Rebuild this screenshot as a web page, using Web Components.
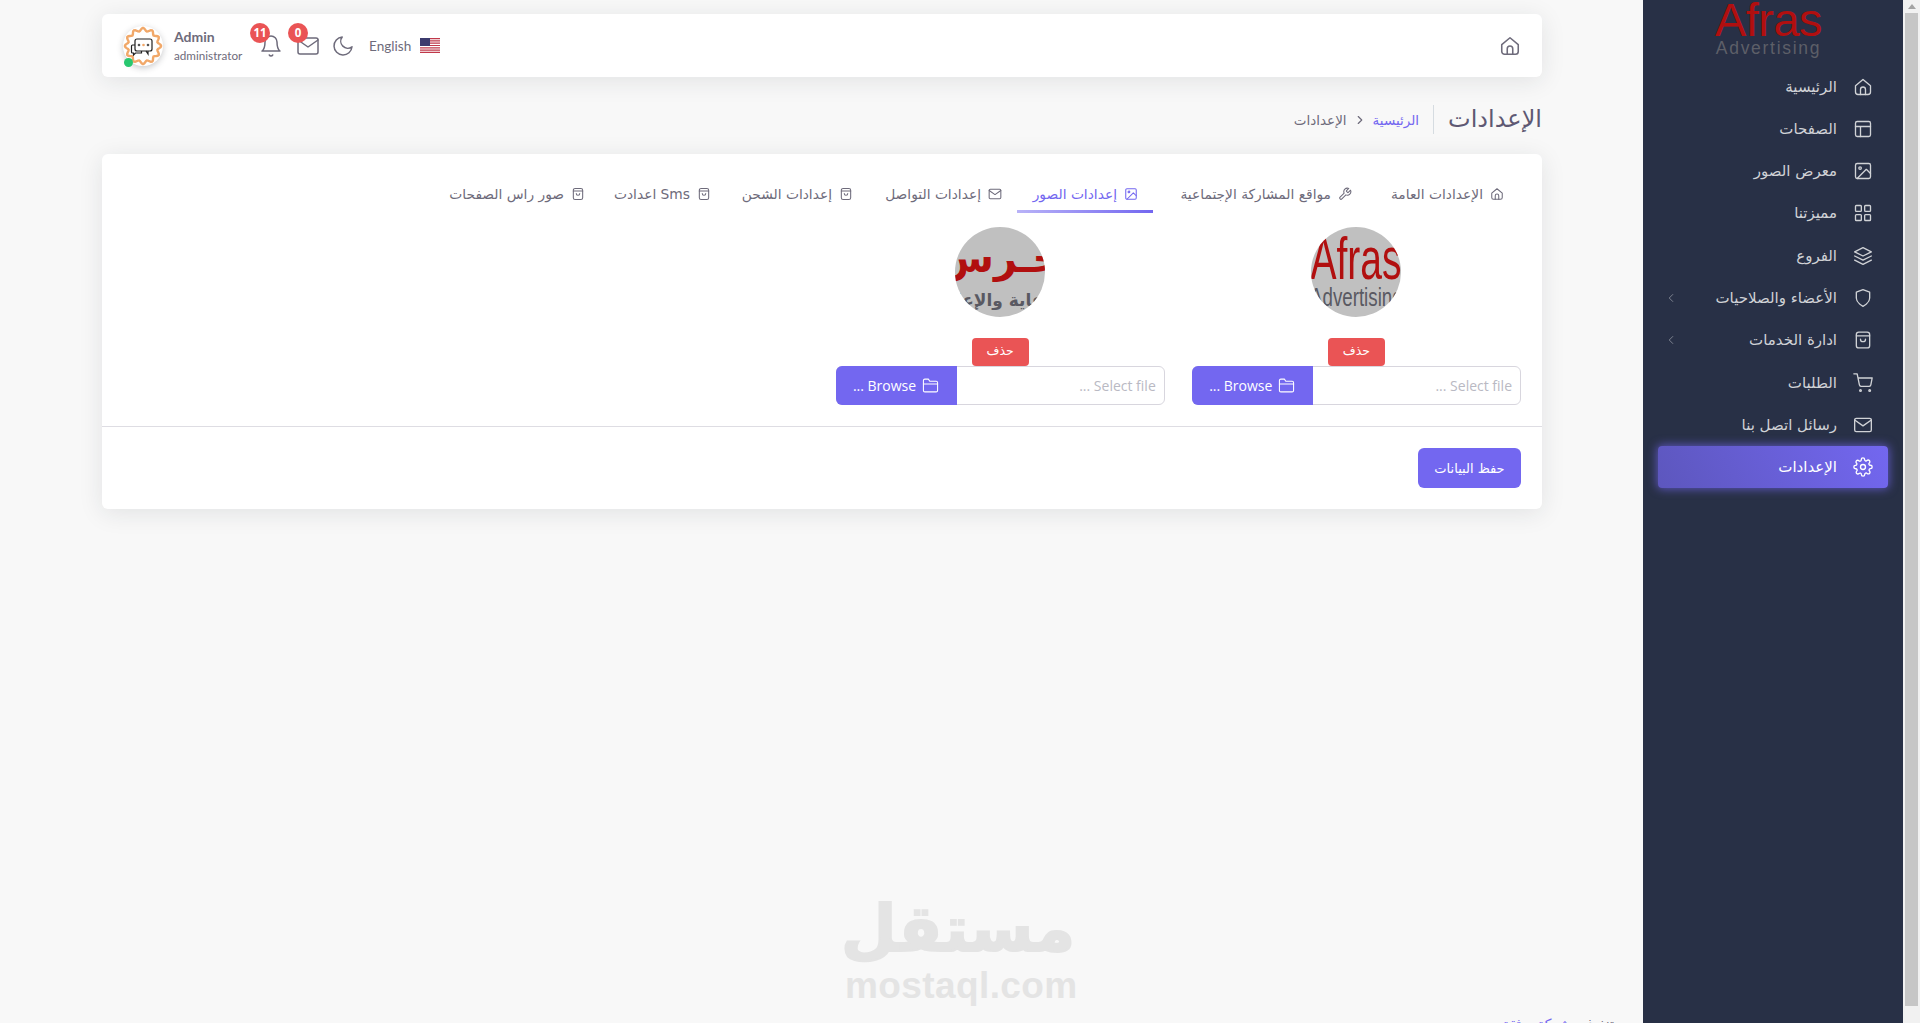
<!DOCTYPE html>
<html lang="ar">
<head>
<meta charset="utf-8">
<title>الإعدادات</title>
<style>
html,body{margin:0;height:1023px;overflow:hidden;background:#f8f8f8;font-family:"Open Sans","DejaVu Sans",sans-serif}
</style>
</head>
<body>
<app-shell>
  <side-nav slot="side"></side-nav>
  <top-bar></top-bar>
  <page-title></page-title>
  <settings-card></settings-card>
  <page-footer></page-footer>
  <mostaql-mark></mostaql-mark>
</app-shell>
<script>
const P={
home:'<path d="M3 10.5 12 3l9 7.5V18a3 3 0 0 1-3 3H6a3 3 0 0 1-3-3Z"/><path d="M9 21v-6a3 3 0 0 1 6 0v6"/>',
layout:'<rect x="3" y="3" width="18" height="18" rx="2"/><path d="M3 9h18M9 21V9"/>',
image:'<rect x="3" y="3" width="18" height="18" rx="2"/><circle cx="8.5" cy="8.5" r="1.5"/><path d="M21 15l-5-5L5 21"/>',
grid:'<rect x="3" y="3" width="7" height="7" rx="1"/><rect x="14" y="3" width="7" height="7" rx="1"/><rect x="14" y="14" width="7" height="7" rx="1"/><rect x="3" y="14" width="7" height="7" rx="1"/>',
layers:'<path d="M12 2 2 7l10 5 10-5-10-5zM2 17l10 5 10-5M2 12l10 5 10-5"/>',
shield:'<path d="M12 22s8-4 8-10V5l-8-3-8 3v7c0 6 8 10 8 10z"/>',
bag:'<rect x="4" y="2.500" width="16" height="19" rx="3"/><path d="M4 7h16M9 11a3 3 0 0 0 6 0"/>',
cart:'<circle cx="9" cy="21" r="1"/><circle cx="20" cy="21" r="1"/><path d="M1 1h4l2.68 13.39a2 2 0 0 0 2 1.61h9.72a2 2 0 0 0 2-1.61L23 6H6"/>',
mail:'<rect x="2" y="4" width="20" height="16" rx="2"/><path d="m22 6-10 7L2 6"/>',
settings:'<circle cx="12" cy="12" r="3"/><path d="M19.4 15a1.65 1.65 0 0 0 .33 1.82l.06.06a2 2 0 1 1-2.83 2.83l-.06-.06a1.65 1.65 0 0 0-2.82 1.17V21a2 2 0 1 1-4 0v-.09A1.65 1.65 0 0 0 7.33 19.73l-.06.06a2 2 0 1 1-2.83-2.83l.06-.06a1.65 1.65 0 0 0-1.17-2.82H3a2 2 0 1 1 0-4h.09A1.65 1.65 0 0 0 4.27 7.33l-.06-.06a2 2 0 1 1 2.83-2.83l.06.06A1.65 1.65 0 0 0 9.92 3.33V3a2 2 0 1 1 4 0v.09a1.65 1.65 0 0 0 2.82 1.17l.06-.06a2 2 0 1 1 2.83 2.83l-.06.06a1.65 1.65 0 0 0 1.17 2.82H21a2 2 0 1 1 0 4h-.09a1.65 1.65 0 0 0-1.51 1z"/>',
tool:'<path d="M14.7 6.3a1 1 0 0 0 0 1.4l1.6 1.6a1 1 0 0 0 1.4 0l3.77-3.77a6 6 0 0 1-7.94 7.94l-6.91 6.91a2.12 2.12 0 0 1-3-3l6.91-6.91a6 6 0 0 1 7.94-7.94l-3.76 3.76z"/>',
folder:'<path d="M22 19a2 2 0 0 1-2 2H4a2 2 0 0 1-2-2V5a2 2 0 0 1 2-2h5l2 3h9a2 2 0 0 1 2 2z"/><path d="M2 10h20"/>',
bell:'<path d="M18 8A6 6 0 0 0 6 8c0 7-3 9-3 9h18s-3-2-3-9"/><path d="M13.7 21a2 2 0 0 1-3.4 0"/>',
moon:'<path d="M21 12.8A9 9 0 1 1 11.2 3 7 7 0 0 0 21 12.8z"/>',
left:'<path d="m15 18-6-6 6-6"/>',
right:'<path d="m9 18 6-6-6-6"/>'
};
function def(name,html,extra){
  const C=class extends HTMLElement{
    constructor(){super();this.attachShadow({mode:'open'}).innerHTML=typeof html==='function'?html(this):html;}
    connectedCallback(){if(extra)extra.call(this);}
  };
  customElements.define(name,C);
}
customElements.define('ic-on',class extends HTMLElement{
  connectedCallback(){
    const s=this.getAttribute('size')||18,w=this.getAttribute('weight')||2;
    if(!this.shadowRoot)this.attachShadow({mode:'open'});
    this.shadowRoot.innerHTML=`<style>:host{display:inline-flex;flex:none}svg{display:block}</style><svg width="${s}" height="${s}" viewBox="0 0 24 24" fill="none" stroke="currentColor" stroke-width="${w}" stroke-linecap="round" stroke-linejoin="round">${P[this.getAttribute('name')]}</svg>`;
  }
});

customElements.define('app-shell',class extends HTMLElement{
  constructor(){super();this.attachShadow({mode:'open'}).innerHTML=`<style>
  :host{display:grid;grid-template-columns:1643px 260px 2px 15px;height:1023px;overflow:hidden;direction:ltr}
  main{grid-column:1;grid-row:1;padding:14px 101px 0 102px;display:flex;flex-direction:column;position:relative;overflow:hidden;height:1023px;box-sizing:border-box;direction:rtl}
  aside{grid-column:2;grid-row:1}
  .gap{grid-column:3;grid-row:1;background:#f1f1f1}
  fake-scrollbar{grid-column:4;grid-row:1}
  </style><main><slot></slot></main><aside><slot name="side"></slot></aside><div class="gap"></div><fake-scrollbar></fake-scrollbar>`;}
});
def('fake-scrollbar',`<style>
  :host{display:flex;flex-direction:column;height:1023px;background:#f1f1f1;padding-right:2px;box-sizing:border-box}
  .b{height:13px;display:flex;align-items:center;justify-content:center}
  .a{width:0;height:0;border:4px solid transparent;border-top:0;border-bottom:5px solid #a3a3a3}
  .t{height:993px;background:#c6c6c6}
</style><div class="b"><div class="a"></div></div><div class="t"></div>`);

def('nav-item',t=>`<style>
  :host{display:flex;align-items:center;height:42.3px;margin:0 15px;padding:0 15px 0 6px;box-sizing:border-box;border-radius:4px;color:#d0d2d6;font:400 15px "DejaVu Sans",sans-serif;direction:rtl;gap:16px}
  :host([active]){color:#fff;background:linear-gradient(-118deg,#7367f0,rgba(115,103,240,.7));box-shadow:0 0 10px 1px rgba(115,103,240,.7)}
  .s{flex:1;display:flex;align-items:center}
  .c{margin-inline-start:auto;opacity:.55;display:flex}
</style><ic-on name="${t.getAttribute('icon')}" size="20" weight="1.6"></ic-on><span class="s"><slot></slot>${t.hasAttribute('more')?'<span class="c"><ic-on name="left" size="14" weight="1.6"></ic-on></span>':''}</span>`);

def('side-nav',`<style>
  :host{display:flex;flex-direction:column;height:1023px;background:#283046;overflow:hidden}
  .logo{height:65.4px;box-sizing:border-box;display:flex;flex-direction:column;align-items:center;direction:ltr;padding:1px 9px 0 0}
  .a{font:400 47px/38px "Liberation Sans",sans-serif;color:#b10f0f;letter-spacing:-.5px;height:38px}
  .b{font:400 17.5px/19px "Liberation Sans",sans-serif;color:#5d5f68;letter-spacing:1.7px}
</style>
<div class="logo"><div class="a">Afras</div><div class="b">Advertising</div></div>
<nav-item icon="home">الرئيسية</nav-item>
<nav-item icon="layout">الصفحات</nav-item>
<nav-item icon="image">معرض الصور</nav-item>
<nav-item icon="grid">مميزتنا</nav-item>
<nav-item icon="layers">الفروع</nav-item>
<nav-item icon="shield" more>الأعضاء والصلاحيات</nav-item>
<nav-item icon="bag" more>ادارة الخدمات</nav-item>
<nav-item icon="cart">الطلبات</nav-item>
<nav-item icon="mail">رسائل اتصل بنا</nav-item>
<nav-item icon="settings" active>الإعدادات</nav-item>`);

def('user-avatar',`<style>
  :host{display:block;position:relative;width:40px;height:40px;border-radius:50%;background:#fff;box-shadow:0 2px 6px rgba(34,41,47,.25)}
  svg{display:block}
  i{position:absolute;left:1px;bottom:-1px;width:9px;height:9px;border-radius:50%;background:#28c76f}
</style><svg width="40" height="40" viewBox="0 0 40 40" fill="none"><path class="w" stroke="#f1a869" stroke-width="2.4"/>
<rect x="12" y="13" width="17" height="12" rx="2" fill="#fff" stroke="#222" stroke-width="1.2"/><path d="M23 25l2 3v-3" stroke="#222" stroke-width="1.2"/><path d="M12 19H9.500a1 1 0 0 0-1 1v6a1 1 0 0 0 1 1h1v2l2-2h6v-2" stroke="#222" stroke-width="1.2"/>
<circle cx="16" cy="19" r="1.300" fill="#555"/><circle cx="25" cy="19" r="1.300" fill="#555"/><circle cx="20.500" cy="19" r="1.300" fill="#f1a869"/></svg><i></i>`,function(){
  let d='';for(let k=0;k<=96;k++){const a=k/96*Math.PI*2,r=16.5+1.6*Math.cos(a*12);d+=(k?'L':'M')+(20+r*Math.cos(a)).toFixed(2)+' '+(20+r*Math.sin(a)).toFixed(2);}
  this.shadowRoot.querySelector('.w').setAttribute('d',d+'Z');
});

def('icon-badge',t=>`<style>
  :host{display:block;position:relative;width:24px;height:24px;color:#6e6b7b}
  b{position:absolute;left:${t.getAttribute('bx')||-1}px;top:-11px;min-width:20px;height:20px;border-radius:50%;background:#ea5455;color:#fff;font:700 11.5px/20px "Open Sans",sans-serif;text-align:center}
</style><ic-on name="${t.getAttribute('icon')}" size="24" weight="1.5"></ic-on>${t.getAttribute('n')?`<b>${t.getAttribute('n')}</b>`:''}`);

def('top-bar',`<style>
  :host{display:flex;align-items:center;justify-content:space-between;height:63px;background:#fff;border-radius:6px;box-shadow:0 4px 24px rgba(34,41,47,.1);padding:0 21px;direction:ltr;color:#6e6b7b;box-sizing:border-box;flex:none}
  .l{display:flex;align-items:center}
  .u{margin-left:11px;display:flex;flex-direction:column;font-family:Lato,sans-serif;width:70px;white-space:nowrap}
  .u b{font-size:14px;line-height:18px;font-weight:700}
  .u span{font-size:11.700px;line-height:18px}
  .lang{font:400 13.600px Lato,sans-serif;margin-left:14px;width:43px;white-space:nowrap}
  svg{display:block}
</style>
<div class="l">
  <user-avatar></user-avatar>
  <div class="u"><b>Admin</b><span>administrator</span></div>
  <icon-badge icon="bell" n="11" bx="-9" style="margin-left:15px"></icon-badge>
  <icon-badge icon="mail" n="0" bx="-8" style="margin-left:13px"></icon-badge>
  <icon-badge icon="moon" style="margin-left:11px"></icon-badge>
  <span class="lang">English</span>
  <svg style="margin-left:8px" width="20" height="15" viewBox="0 0 20 15"><rect width="20" height="15" fill="#fff"/><path d="M0 .6h20M0 2.900h20M0 5.200h20M0 7.500h20M0 9.800h20M0 12.100h20M0 14.400h20" stroke="#c0394a" stroke-width="1.200"/><rect width="10" height="8" fill="#3c3b6e"/></svg>
</div>
<ic-on name="home" size="22" weight="1.700"></ic-on>`);

def('page-title',`<style>
  :host{display:flex;align-items:center;height:29px;margin-top:28px;direction:rtl;color:#6e6b7b;flex:none}
  h2{margin:0;font:400 24px/29px "DejaVu Sans",sans-serif;color:#5e5873;padding-left:14px;border-left:1px solid #d6dce1}
  .b{display:flex;align-items:center;margin-right:14px;font:400 13.500px "DejaVu Sans",sans-serif;gap:6px}
  a{color:#7367f0}
</style><h2>الإعدادات</h2><div class="b"><a>الرئيسية</a><ic-on name="right" size="14" weight="2"></ic-on><span>الإعدادات</span></div>`);

def('tab-item',t=>`<style>
  :host{display:flex;align-items:center;gap:7px;height:38px;width:${t.getAttribute('w')}px;padding:0 15px;box-sizing:border-box;color:#6e6b7b;font:400 13.800px "DejaVu Sans",sans-serif;position:relative;white-space:nowrap;flex:none}
  :host([active]){color:#7367f0}
  :host([active])::after{content:"";position:absolute;left:0;right:0;bottom:0;height:3px;background:linear-gradient(-90deg,#7367f0,rgba(115,103,240,.5))}
</style><ic-on name="${t.getAttribute('icon')}" size="14" weight="1.800"></ic-on><slot></slot>`);

def('image-upload',t=>`<style>
  :host{display:flex;flex-direction:column;align-items:center;min-width:0}
  .pic{width:90px;height:90px;border-radius:50%;background:#c0c0c0;overflow:hidden;display:flex;flex-direction:column;align-items:center;position:relative}
  .del{margin-top:21px;width:57px;height:28px;border-radius:4px;background:#ea5455;color:#fff;font:400 12.500px/26px "DejaVu Sans",sans-serif;text-align:center}
  .f{align-self:stretch;display:flex;height:39px;direction:rtl;border:1px solid #d8d6de;border-radius:6px;box-sizing:border-box;background:#fff}
  .i{flex:1;font:400 14px/37px "Open Sans",sans-serif;color:#b9b9c3;padding:0 8px;direction:ltr;text-align:right}
  .btn{width:121px;margin:-1px;border-radius:6px 0 0 6px;background:#7367f0;color:#fff;font:500 14px/39px "Open Sans",sans-serif;display:flex;align-items:center;justify-content:center;gap:6px;direction:rtl;height:39px}
  .en{direction:ltr;white-space:nowrap;width:90px;display:flex;flex-direction:column;align-items:center;padding-top:8px}
  .en b{font:400 60px/48px "Liberation Sans",sans-serif;color:#b10f0f;height:48px;transform:scaleX(.65)}
  .en span{font:400 26px/26px "Liberation Sans",sans-serif;color:#595962;transform:scaleX(.72);margin-top:1px}
  .ar{direction:rtl;white-space:nowrap;width:90px;display:flex;flex-direction:column;align-items:center;padding-top:6px}
  .ar b{font:700 40px/50px "DejaVu Sans",sans-serif;color:#b10f0f;height:50px}
  .ar span{font:700 17px/24px "DejaVu Sans",sans-serif;color:#595962;margin-top:5px}
</style>
<div class="pic">${t.getAttribute('lang-kind')==='ar'?'<div class="ar"><b>حـرس</b><span>الدعاية والإعلان</span></div>':'<div class="en"><b>Afras</b><span>Advertising</span></div>'}</div>
<div class="del">حذف</div>
<div class="f"><div class="i">... Select file</div><div class="btn"><ic-on name="folder" size="17" weight="1.500"></ic-on><span>Browse ...</span></div></div>`);

def('settings-card',`<style>
  :host{display:block;margin-top:20px;height:355px;background:#fff;border-radius:6px;box-shadow:0 4px 24px rgba(34,41,47,.1);direction:rtl;flex:none;box-sizing:border-box;padding-top:21px}
  .tabs{display:flex;padding:0 23px;height:38px;box-sizing:border-box}
  .grid{display:grid;grid-template-columns:repeat(4,1fr);gap:27px;padding:0 21px;margin-top:14px;height:199px;box-sizing:border-box}
  hr{margin:0;border:0;border-top:1px solid #dedde3}
  .foot{display:flex;padding:21px 21px 0}
  button{width:103px;height:40px;border:0;border-radius:6px;background:#7367f0;color:#fff;font:400 13px "DejaVu Sans",sans-serif;padding:0}
</style>
<div class="tabs">
  <tab-item w="152" icon="home">الإعدادات العامة</tab-item>
  <tab-item w="214" icon="tool">مواقع المشاركة الإجتماعية</tab-item>
  <tab-item w="136" icon="image" active>إعدادات الصور</tab-item>
  <tab-item w="149" icon="mail">إعدادات التواصل</tab-item>
  <tab-item w="142" icon="bag">إعدادات الشحن</tab-item>
  <tab-item w="126" icon="bag">Sms اعدادت</tab-item>
  <tab-item w="159" icon="bag">صور راس الصفحات</tab-item>
</div>
<div class="grid"><image-upload lang-kind="en"></image-upload><image-upload lang-kind="ar"></image-upload></div>
<hr>
<div class="foot"><button>حفظ البيانات</button></div>`);

def('page-footer',`<style>
  :host{display:block;margin:505px -72px 0 0;direction:rtl;font:400 14px/20px "DejaVu Sans",sans-serif;color:#6e6b7b;flex:none;word-spacing:12px}
  a{color:#7367f0}
</style>تنفيذ <a>شركة ثقة مصر</a>`);

def('mostaql-mark',`<style>
  :host{position:absolute;left:845px;top:884px;width:230px;color:#e4e4e4;text-align:center;direction:rtl;pointer-events:none}
  .a{font:700 64px/84px "DejaVu Sans",sans-serif;white-space:nowrap;-webkit-text-stroke:2px #e4e4e4;padding-top:3px;margin-bottom:-3px}
  .b{font:700 37px/36px "Liberation Sans",sans-serif;direction:ltr;white-space:nowrap;letter-spacing:.4px}
</style><div class="a">مستقل</div><div class="b">mostaql.com</div>`);
</script>
</body>
</html>
